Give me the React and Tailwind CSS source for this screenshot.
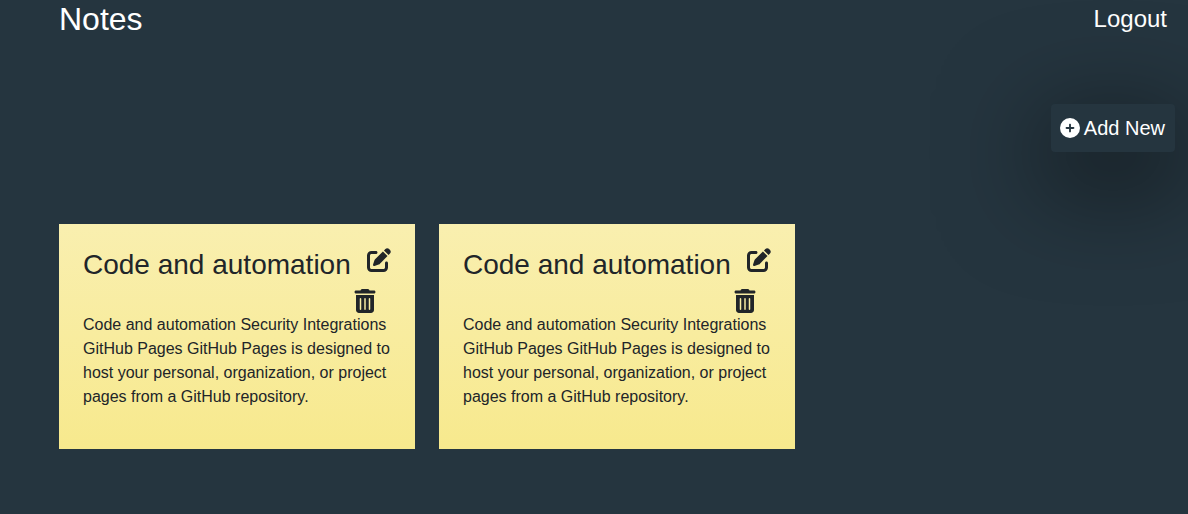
import { FaCirclePlus, FaPenToSquare, FaTrashCan } from "react-icons/fa6";

const notes = [
  {
    id: 1,
    title: "Code and automation",
    body: "Code and automation Security Integrations GitHub Pages GitHub Pages is designed to host your personal, organization, or project pages from a GitHub repository.",
  },
  {
    id: 2,
    title: "Code and automation",
    body: "Code and automation Security Integrations GitHub Pages GitHub Pages is designed to host your personal, organization, or project pages from a GitHub repository.",
  },
];

function Note({ title, body }) {
  return (
    <article className="bg-linear-to-b from-[#f9efaf] to-[#f7e98d] px-6 pt-6 pb-10 text-[#212529]">
      <header className="flex items-start justify-between">
        <h2 className="text-[28px] leading-[33px]">{title}</h2>
        <button type="button" aria-label="Edit note" className="text-2xl leading-none">
          <FaPenToSquare />
        </button>
      </header>
      <div className="mt-2 flex justify-end pr-3.5">
        <button type="button" aria-label="Delete note" className="text-2xl leading-none">
          <FaTrashCan />
        </button>
      </div>
      <p className="text-base">{body}</p>
    </article>
  );
}

export default function App() {
  return (
    <div className="min-h-screen overflow-hidden bg-[#25353f] font-['Liberation_Sans',Arial,sans-serif] text-white">
      <header className="flex items-center justify-between pr-[21px] pl-[59px]">
        <h1 className="text-[32px] leading-[38px]">Notes</h1>
        <a href="#logout" className="text-2xl leading-9">Logout</a>
      </header>
      <div className="mt-[66px] flex justify-end pr-[13px]">
        <button
          type="button"
          className="flex h-12 items-center gap-1 rounded bg-[#25353f] pr-2.5 pl-[9px] text-xl shadow-[0_25px_100px_10px_rgba(0,0,0,0.55)]"
        >
          <FaCirclePlus />
          Add New
        </button>
      </div>
      <main className="mt-[72px] grid grid-cols-[repeat(auto-fill,minmax(340px,356px))] gap-6 pr-[13px] pl-[59px]">
        {notes.map((note) => (
          <Note key={note.id} title={note.title} body={note.body} />
        ))}
      </main>
    </div>
  );
}
